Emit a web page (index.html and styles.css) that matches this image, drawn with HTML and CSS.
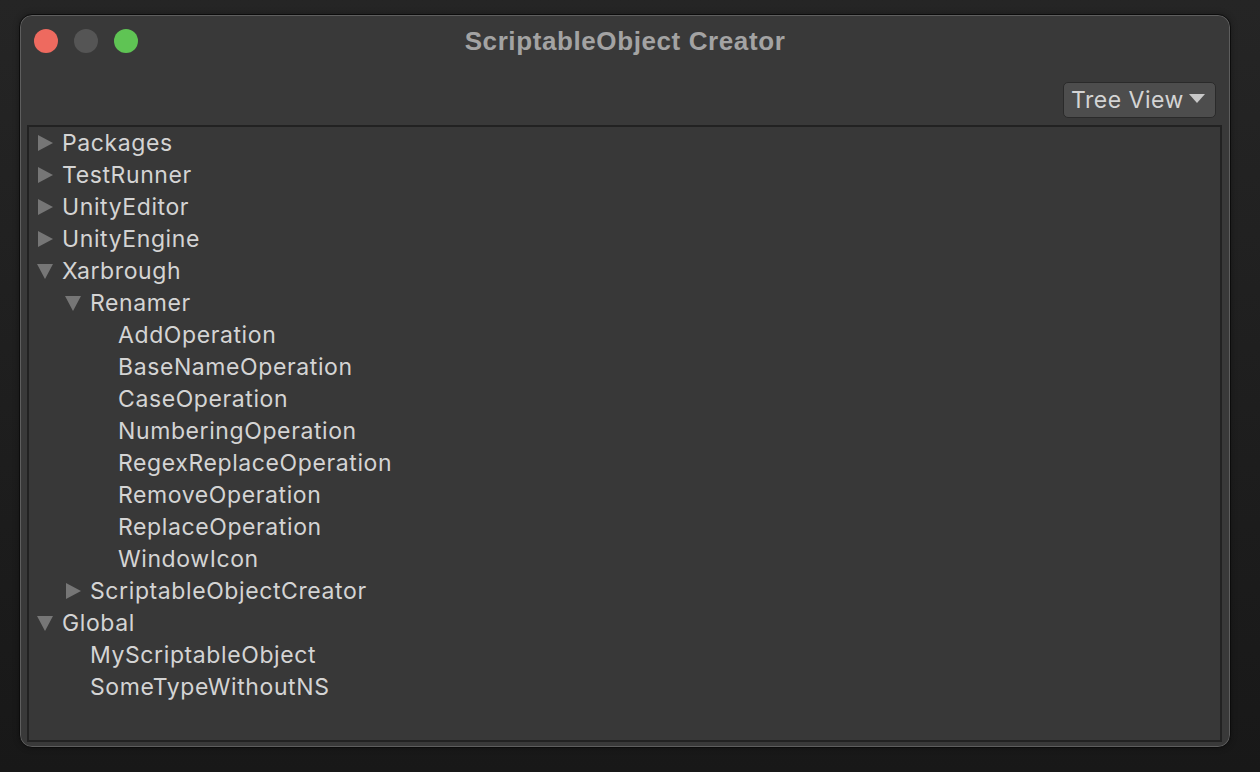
FILE: index.html
```html
<!DOCTYPE html>
<html>
<head>
<meta charset="utf-8">
<link rel="stylesheet" href="styles.css">
</head>
<body>
<div class="window">
  <div class="titlebar">
    <div class="lights">
      <span class="light red"></span>
      <span class="light gray"></span>
      <span class="light green"></span>
    </div>
    <div class="title">ScriptableObject Creator</div>
  </div>
  <div class="toolbar">
    <button class="dropdown">Tree View<span class="caret"></span></button>
  </div>
  <div class="panel">
    <div class="row l0"><span class="tri right"></span><span class="label">Packages</span></div>
    <div class="row l0"><span class="tri right"></span><span class="label">TestRunner</span></div>
    <div class="row l0"><span class="tri right"></span><span class="label">UnityEditor</span></div>
    <div class="row l0"><span class="tri right"></span><span class="label">UnityEngine</span></div>
    <div class="row l0"><span class="tri down"></span><span class="label">Xarbrough</span></div>
    <div class="row l1"><span class="tri down"></span><span class="label">Renamer</span></div>
    <div class="row l2"><span class="tri none"></span><span class="label">AddOperation</span></div>
    <div class="row l2"><span class="tri none"></span><span class="label">BaseNameOperation</span></div>
    <div class="row l2"><span class="tri none"></span><span class="label">CaseOperation</span></div>
    <div class="row l2"><span class="tri none"></span><span class="label">NumberingOperation</span></div>
    <div class="row l2"><span class="tri none"></span><span class="label">RegexReplaceOperation</span></div>
    <div class="row l2"><span class="tri none"></span><span class="label">RemoveOperation</span></div>
    <div class="row l2"><span class="tri none"></span><span class="label">ReplaceOperation</span></div>
    <div class="row l2"><span class="tri none"></span><span class="label">WindowIcon</span></div>
    <div class="row l1"><span class="tri right"></span><span class="label">ScriptableObjectCreator</span></div>
    <div class="row l0"><span class="tri down"></span><span class="label">Global</span></div>
    <div class="row l1"><span class="tri none"></span><span class="label">MyScriptableObject</span></div>
    <div class="row l1"><span class="tri none"></span><span class="label">SomeTypeWithoutNS</span></div>
  </div>
</div>
</body>
</html>
```
FILE: styles.css
```css
html, body {
  margin: 0;
  padding: 0;
}
body {
  width: 1260px;
  height: 772px;
  overflow: hidden;
  background: linear-gradient(180deg, #252525 0%, #1d1d1d 60%, #181818 100%);
  font-family: Inter, "Noto Sans", sans-serif;
  padding-top: 14px;
  padding-left: 19px;
  box-sizing: border-box;
}
.window {
  width: 1212px;
  height: 734px;
  box-sizing: border-box;
  background: #393939;
  border-radius: 13px;
  border: 1px solid #0c0c0c;
  box-shadow: inset 0 0 0 1px #5e5e5e, 0 0 6px rgba(0,0,0,0.3);
  display: flex;
  flex-direction: column;
  padding: 0 8px 5px 7px;
}
.titlebar {
  position: relative;
  height: 52px;
  display: flex;
  align-items: center;
  justify-content: center;
}
.lights {
  position: absolute;
  left: 7px;
  top: 14px;
  display: flex;
  gap: 16px;
}
.light {
  width: 24px;
  height: 24px;
  border-radius: 50%;
  display: block;
}
.red { background: #ee6a5f; }
.gray { background: #555555; }
.green { background: #5fc454; }
.title {
  font-family: "Liberation Sans", Arial, sans-serif;
  font-weight: bold;
  font-size: 26px;
  letter-spacing: 0.6px;
  color: #a3a3a3;
  margin-top: 0px;
  margin-left: 1px;
}
.toolbar {
  display: flex;
  justify-content: flex-end;
  align-items: flex-start;
  padding-top: 15px;
  box-sizing: border-box;
  padding-right: 6px;
  height: 58px;
}
.dropdown {
  height: 36px;
  width: 153px;
  box-sizing: border-box;
  background: #4d4d4d;
  border: 1px solid #2a2a2a;
  border-radius: 5px;
  color: #d4d4d4;
  font-family: Inter, "Noto Sans", sans-serif;
  font-size: 23px;
  letter-spacing: 0.5px;
  padding: 0 0 0 7px;
  display: flex;
  align-items: center;
  gap: 5px;
}
.caret {
  width: 0;
  height: 0;
  border-left: 8px solid transparent;
  border-right: 8px solid transparent;
  border-top: 9px solid #c8c8c8;
  margin-top: -3px;
}
.panel {
  flex: 1;
  border: 2px solid #222222;
  background: #383838;
  padding-top: 0px;
  box-sizing: border-box;
}
.row {
  height: 32px;
  display: flex;
  align-items: center;
  color: #d4d4d4;
  font-size: 23px;
  letter-spacing: 0.6px;
}
.l0 { padding-left: 8px; }
.l1 { padding-left: 36px; }
.l2 { padding-left: 64px; }
.tri {
  width: 16px;
  height: 16px;
  margin-right: 9px;
  flex: none;
  display: block;
  position: relative;
}
.tri.right::before {
  content: "";
  position: absolute;
  left: 1px;
  top: 0;
  border-top: 8px solid transparent;
  border-bottom: 8px solid transparent;
  border-left: 15px solid #767676;
}
.tri.down::before {
  content: "";
  position: absolute;
  left: 0;
  top: 1px;
  border-left: 8px solid transparent;
  border-right: 8px solid transparent;
  border-top: 15px solid #767676;
}
.label {
  line-height: 1;
}
```
